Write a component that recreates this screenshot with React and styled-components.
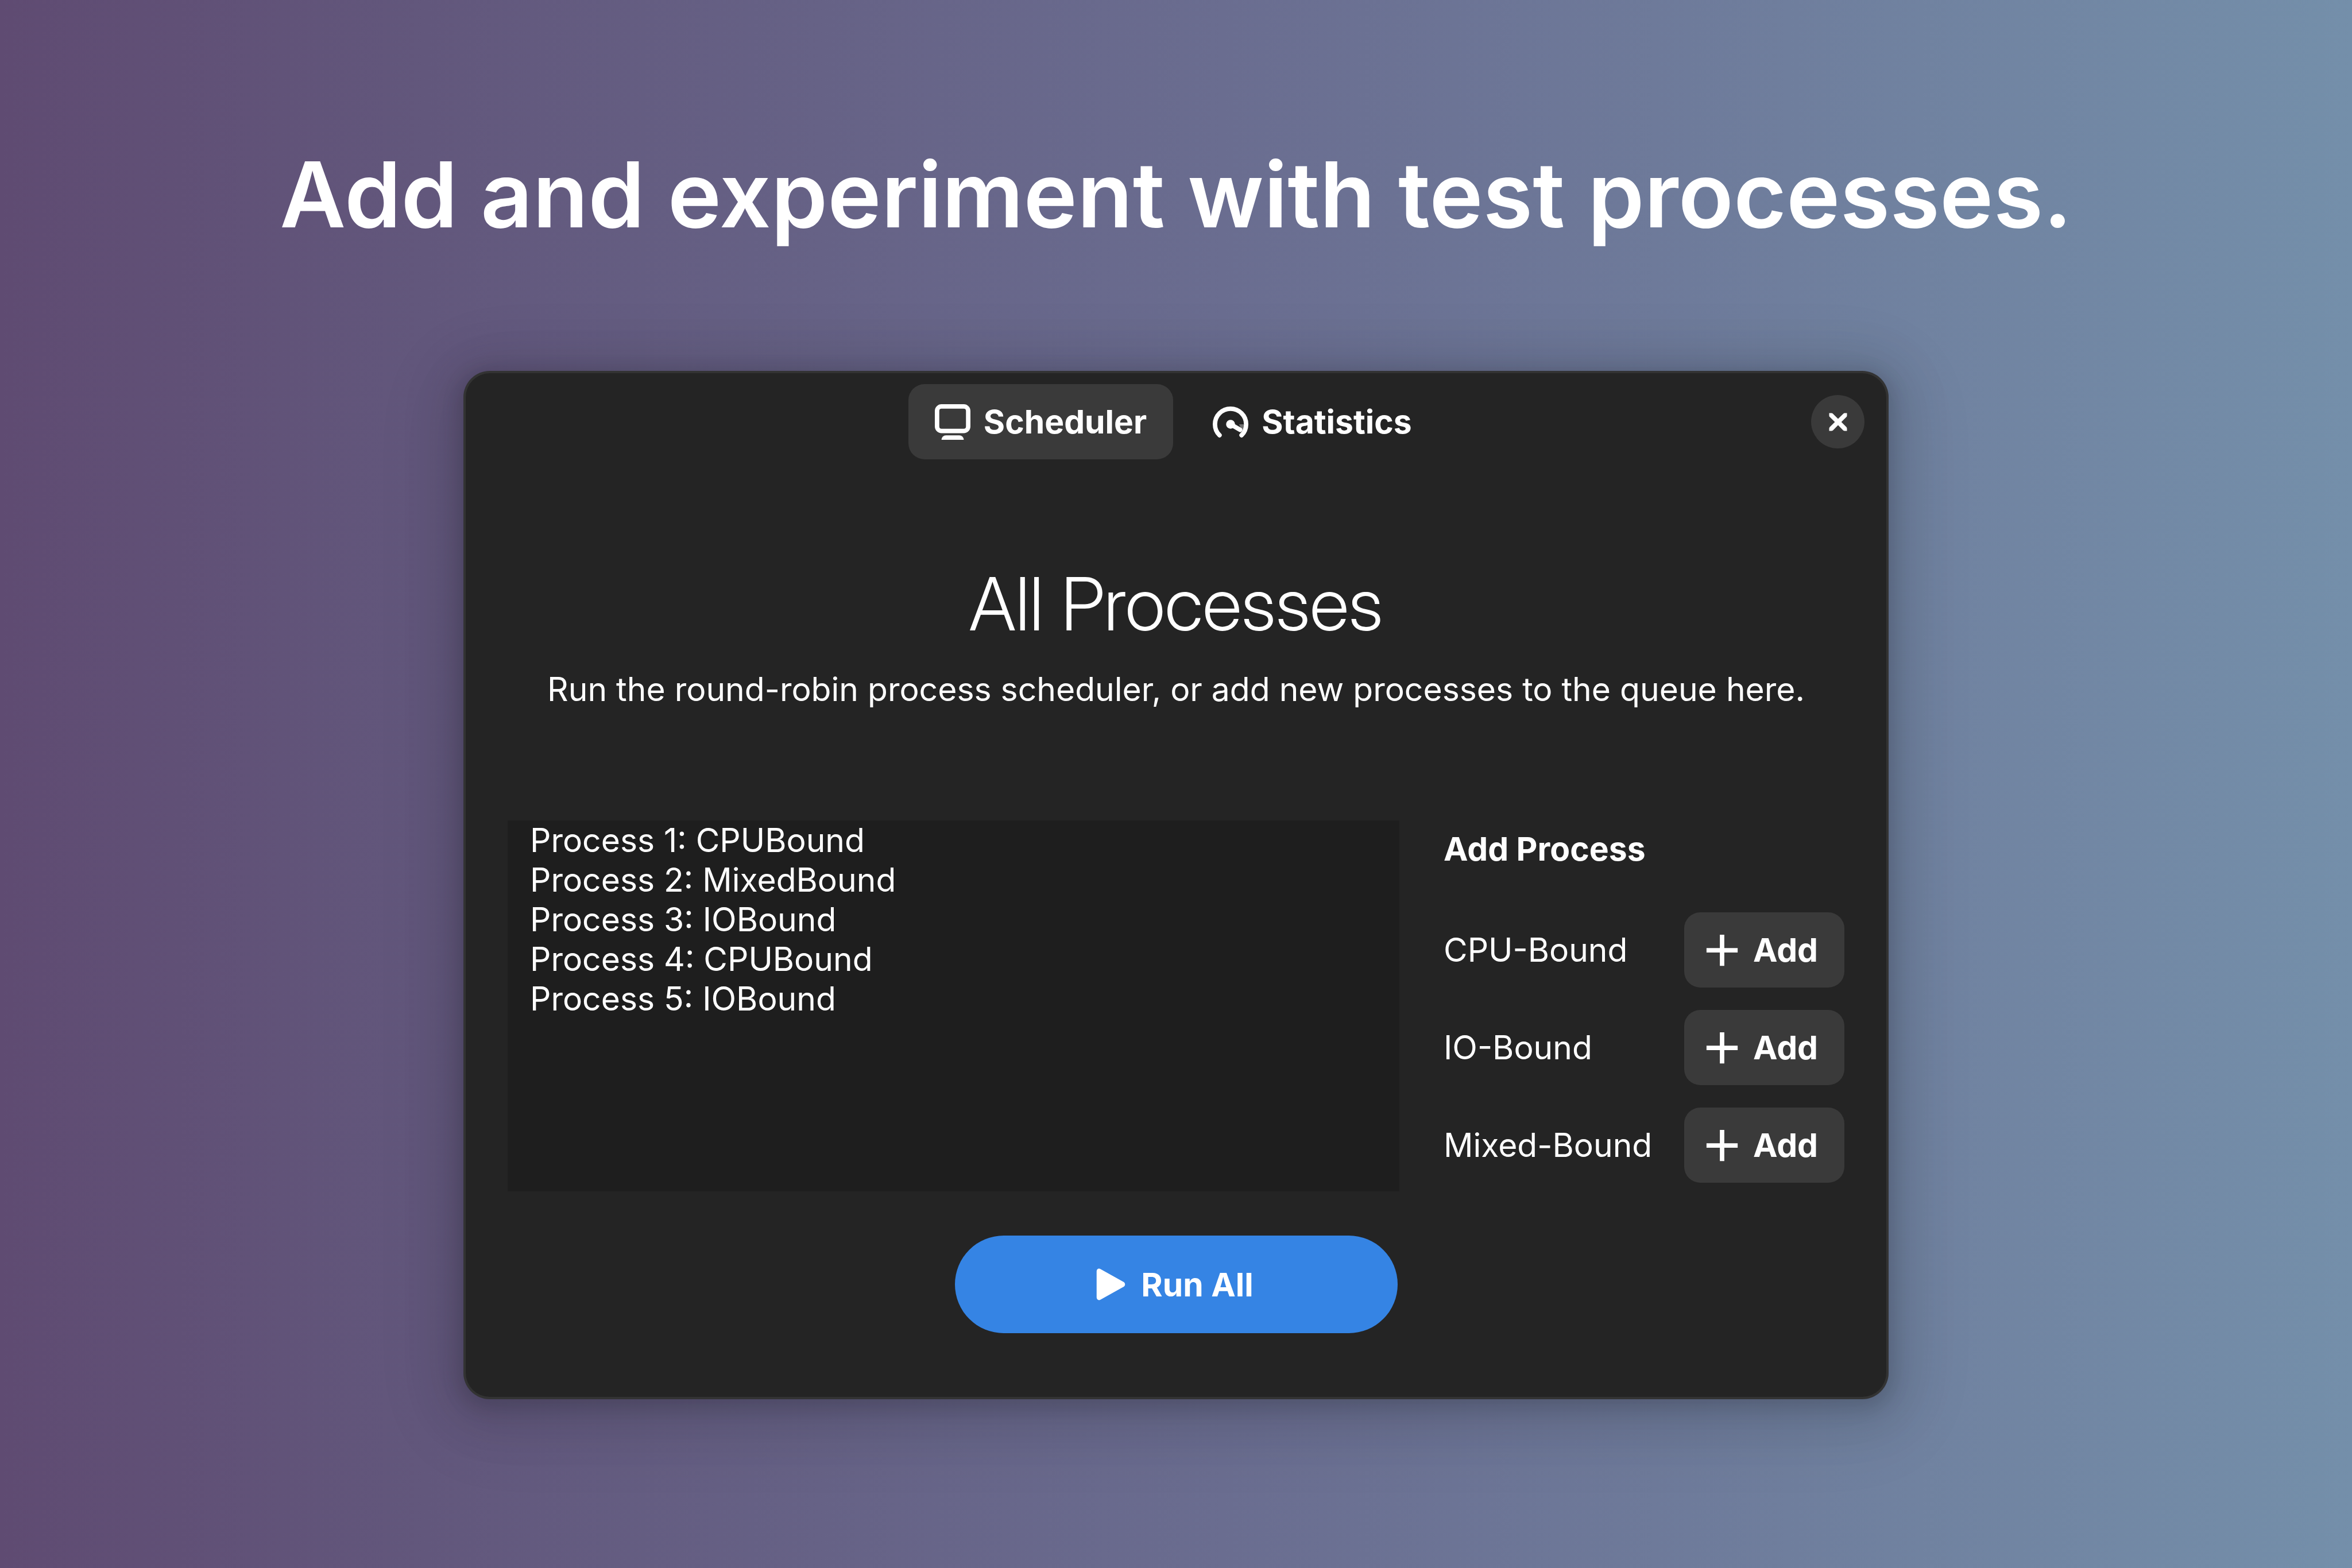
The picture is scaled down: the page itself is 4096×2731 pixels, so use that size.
import React from "react";
import styled, { createGlobalStyle } from "styled-components";

const GlobalStyle = createGlobalStyle`
  *, *::before, *::after { box-sizing: border-box; }
  body { margin: 0; }
  button { font: inherit; color: inherit; border: 0; cursor: pointer; }
`;

const Page = styled.div`
  min-height: 100vh;
  display: flex;
  flex-direction: column;
  align-items: center;
  gap: 211px;
  padding: 243px 192px;
  background: linear-gradient(90deg, #5f4b72 0%, #62577c 18%, #6a6d90 52%, #748faa 100%);
  color: #ffffff;
  font-family: Inter, "Noto Sans", sans-serif;
  font-size: 57px;
  line-height: 69px;
`;

const Headline = styled.h1`
  margin: 0;
  font-size: 158px;
  line-height: 192px;
  font-weight: 600;
  text-align: center;
`;

const AppWindow = styled.main`
  width: 100%;
  max-width: 2482px;
  padding-bottom: 115px;
  border-radius: 46px;
  background: #242424;
  box-shadow:
    inset 0 0 0 4px rgba(255, 255, 255, 0.07),
    0 8px 31px 8px rgba(0, 0, 0, 0.13),
    0 12px 77px 39px rgba(0, 0, 0, 0.09),
    0 23px 124px 62px rgba(0, 0, 0, 0.04);
`;

const HeaderBar = styled.header`
  display: grid;
  grid-template-columns: 1fr auto 1fr;
  align-items: center;
  padding: 23px 42px;
`;

const Tabs = styled.nav`
  grid-column: 2;
  display: flex;
  gap: 23px;
`;

const Button = styled.button`
  display: inline-flex;
  align-items: center;
  justify-content: center;
  gap: 23px;
  height: 131px;
  padding: 0 46px 0 35px;
  border-radius: 28px;
  background: #3a3a3a;
  font-weight: 700;
  white-space: nowrap;
`;

const Tab = styled(Button)`
  justify-content: flex-start;
  min-width: 448px;
  padding: 0 46px;
  background: ${(p) => (p.$active ? "#3a3a3a" : "transparent")};
`;

const RunButton = styled(Button)`
  align-self: center;
  width: 771px;
  height: 170px;
  border-radius: 85px;
  background: #3584e4;
`;

const CloseButton = styled(Button)`
  justify-self: end;
  width: 93px;
  height: 93px;
  padding: 0;
  border-radius: 50%;
`;

const Icon = styled.svg`
  flex: none;
  width: 62px;
  height: 62px;
  fill: currentColor;
`;

const Content = styled.div`
  display: flex;
  flex-direction: column;
  gap: 77px;
  padding: 154px 77px 0;
`;

const Intro = styled.section`
  display: flex;
  flex-direction: column;
  gap: 39px;
  margin-bottom: 117px;
  text-align: center;
`;

const Title = styled.h2`
  margin: 0;
  font-family: "Inter Display", Inter, "Noto Sans", sans-serif;
  font-size: 128px;
  line-height: 150px;
  font-weight: 300;
`;

const Description = styled.p`
  margin: 0;
`;

const Columns = styled.div`
  display: grid;
  grid-template-columns: 1fr 698px;
  gap: 77px;
`;

const ProcessList = styled.ul`
  margin: 0;
  padding: 0 39px;
  list-style: none;
  background: #1e1e1e;
`;

const AddPanel = styled.section`
  display: flex;
  flex-direction: column;
  gap: 39px;
  padding: 15px 0;
`;

const PanelTitle = styled.h3`
  margin: 0 0 37px;
  font-size: inherit;
  font-weight: 700;
`;

const AddRow = styled.div`
  display: flex;
  align-items: center;
  justify-content: space-between;
`;

const MonitorIcon = () => (
  <Icon viewBox="0 0 16 16" aria-hidden="true">
    <path
      fillRule="evenodd"
      d="M3 0h10a3 3 0 0 1 3 3v7a3 3 0 0 1-3 3H3a3 3 0 0 1-3-3V3a3 3 0 0 1 3-3zm0 2a1 1 0 0 0-1 1v7a1 1 0 0 0 1 1h10a1 1 0 0 0 1-1V3a1 1 0 0 0-1-1z"
    />
    <path d="M3 16a2 2 0 0 1 2-2h6a2 2 0 0 1 2 2z" />
  </Icon>
);

const GaugeIcon = () => (
  <Icon viewBox="0 0 16 16" aria-hidden="true">
    <path d="M11.8 9H14v1.6l-.9 1.2z" opacity="0.35" />
    <path
      d="M3.05 13.95a7 7 0 1 1 9.9 0M8 9l4.3 2.5"
      fill="none"
      stroke="currentColor"
      strokeWidth="2"
      strokeLinecap="round"
    />
    <circle cx="8" cy="9" r="2" />
  </Icon>
);

const CloseIcon = () => (
  <Icon viewBox="0 0 16 16" aria-hidden="true">
    <path d="M4 4h1.03c.25.01.51.13.69.31L8 6.6l2.31-2.29c.27-.23.45-.3.69-.31h1v1c0 .29-.04.55-.25.75L9.47 8.03l2.25 2.25c.19.19.28.45.28.72v1h-1c-.27 0-.53-.09-.72-.28L8 9.44l-2.28 2.28c-.19.19-.45.28-.72.28H4v-1c0-.27.09-.53.28-.72l2.28-2.25-2.28-2.28C4.07 5.55 3.98 5.28 4 5z" />
  </Icon>
);

const PlusIcon = () => (
  <Icon viewBox="0 0 16 16" aria-hidden="true">
    <path d="M7 1h2v6h6v2H9v6H7V9H1V7h6z" />
  </Icon>
);

const PlayIcon = () => (
  <Icon viewBox="0 0 16 16" aria-hidden="true">
    <path d="M2 13.9V2.1C2 1.2 2.9.6 3.7 1.1l10.4 5.8c.9.5.9 1.7 0 2.2L3.7 14.9C2.9 15.4 2 14.8 2 13.9z" />
  </Icon>
);

const processes = ["CPUBound", "MixedBound", "IOBound", "CPUBound", "IOBound"];
const kinds = ["CPU-Bound", "IO-Bound", "Mixed-Bound"];

export default function App() {
  return (
    <>
      <GlobalStyle />
      <Page>
        <Headline>Add and experiment with test processes.</Headline>
        <AppWindow>
          <HeaderBar>
            <Tabs>
              <Tab type="button" $active aria-pressed="true">
                <MonitorIcon />
                Scheduler
              </Tab>
              <Tab type="button" aria-pressed="false">
                <GaugeIcon />
                Statistics
              </Tab>
            </Tabs>
            <CloseButton type="button" aria-label="Close">
              <CloseIcon />
            </CloseButton>
          </HeaderBar>
          <Content>
            <Intro>
              <Title>All Processes</Title>
              <Description>
                Run the round-robin process scheduler, or add new processes to the queue here.
              </Description>
            </Intro>
            <Columns>
              <ProcessList>
                {processes.map((kind, i) => (
                  <li key={i}>{`Process ${i + 1}: ${kind}`}</li>
                ))}
              </ProcessList>
              <AddPanel>
                <PanelTitle>Add Process</PanelTitle>
                {kinds.map((kind) => (
                  <AddRow key={kind}>
                    <span id={kind}>{kind}</span>
                    <Button type="button" aria-describedby={kind}>
                      <PlusIcon />
                      Add
                    </Button>
                  </AddRow>
                ))}
              </AddPanel>
            </Columns>
            <RunButton type="button">
              <PlayIcon />
              Run All
            </RunButton>
          </Content>
        </AppWindow>
      </Page>
    </>
  );
}
